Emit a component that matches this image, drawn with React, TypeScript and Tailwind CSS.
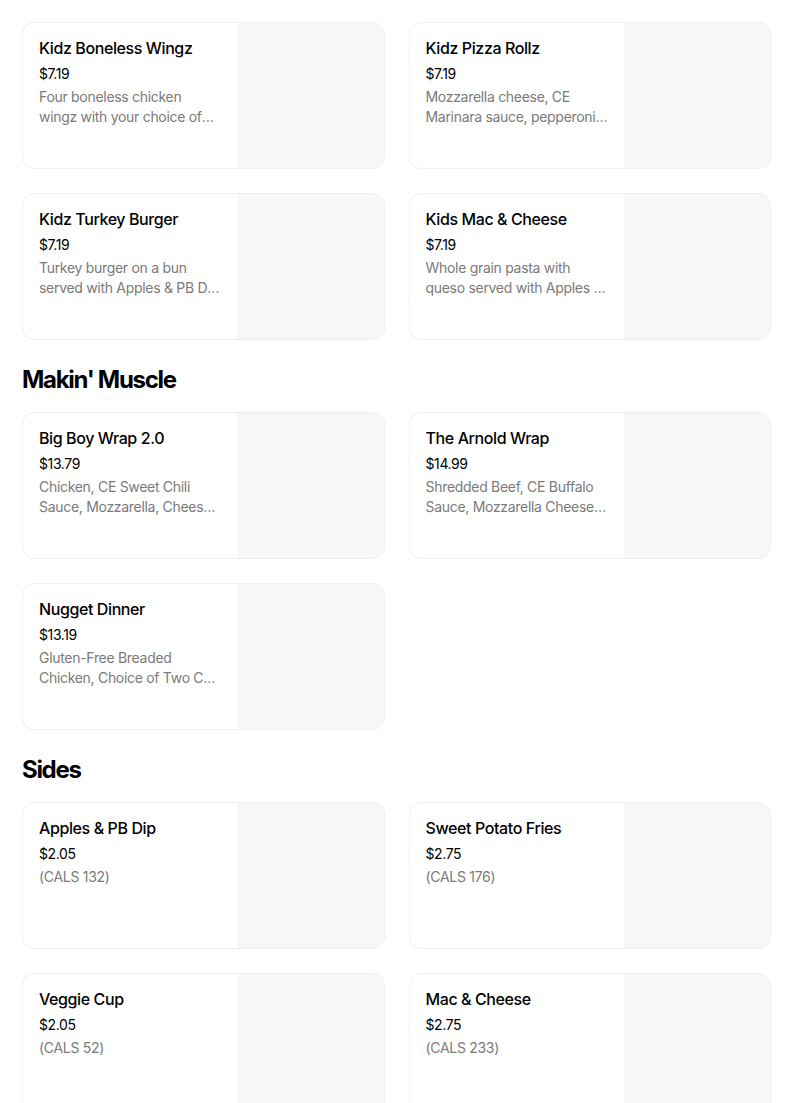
type Item = {
  name: string;
  price: string;
  desc: string;
};

type Section = {
  title?: string;
  items: Item[];
};

const sections: Section[] = [
  {
    items: [
      {
        name: "Kidz Boneless Wingz",
        price: "$7.19",
        desc: "Four boneless chicken wingz with your choice of sauce served with Apples & PB Dip",
      },
      {
        name: "Kidz Pizza Rollz",
        price: "$7.19",
        desc: "Mozzarella cheese, CE Marinara sauce, pepperoni, served with Apples & PB Dip",
      },
      {
        name: "Kidz Turkey Burger",
        price: "$7.19",
        desc: "Turkey burger on a bun served with Apples & PB Dip and a drink",
      },
      {
        name: "Kids Mac & Cheese",
        price: "$7.19",
        desc: "Whole grain pasta with queso served with Apples & PB Dip",
      },
    ],
  },
  {
    title: "Makin' Muscle",
    items: [
      {
        name: "Big Boy Wrap 2.0",
        price: "$13.79",
        desc: "Chicken, CE Sweet Chili Sauce, Mozzarella, Cheese, Romaine, Tomatoes",
      },
      {
        name: "The Arnold Wrap",
        price: "$14.99",
        desc: "Shredded Beef, CE Buffalo Sauce, Mozzarella Cheese, Romaine",
      },
      {
        name: "Nugget Dinner",
        price: "$13.19",
        desc: "Gluten-Free Breaded Chicken, Choice of Two CE Sides",
      },
    ],
  },
  {
    title: "Sides",
    items: [
      { name: "Apples & PB Dip", price: "$2.05", desc: "(CALS 132)" },
      { name: "Sweet Potato Fries", price: "$2.75", desc: "(CALS 176)" },
      { name: "Veggie Cup", price: "$2.05", desc: "(CALS 52)" },
      { name: "Mac & Cheese", price: "$2.75", desc: "(CALS 233)" },
    ],
  },
];

function MenuCard({ item }: { item: Item }) {
  return (
    <div className="flex h-[147px] overflow-hidden rounded-xl border border-[#efefef] bg-white">
      <div className="flex-1 min-w-0 px-4 pt-[15px]">
        <div className="text-[16px] leading-5 font-medium tracking-[-0.4px] text-black truncate">
          {item.name}
        </div>
        <div className="mt-[6px] text-[14px] leading-5 tracking-[-0.4px] text-black">
          {item.price}
        </div>
        <div className="mt-[3px] text-[14px] leading-5 tracking-[-0.3px] text-[#7a7a7a] line-clamp-2">
          {item.desc}
        </div>
      </div>
      <div className="w-[146px] shrink-0 bg-[#f7f7f7]" />
    </div>
  );
}

export default function App() {
  return (
    <main
      className="min-h-screen bg-white pl-[22px] pt-[22px] pb-10"
      style={{ fontFamily: "Inter, 'Liberation Sans', sans-serif" }}
    >
      <div className="w-[749px]">
        {sections.map((section, i) => (
          <section key={i}>
            {section.title && (
              <h2 className="mt-6 mb-4 text-[24px] leading-8 font-bold tracking-[-1.3px] text-black">
                {section.title}
              </h2>
            )}
            <div className="grid grid-cols-2 gap-6">
              {section.items.map((item) => (
                <MenuCard key={item.name} item={item} />
              ))}
            </div>
          </section>
        ))}
      </div>
    </main>
  );
}
